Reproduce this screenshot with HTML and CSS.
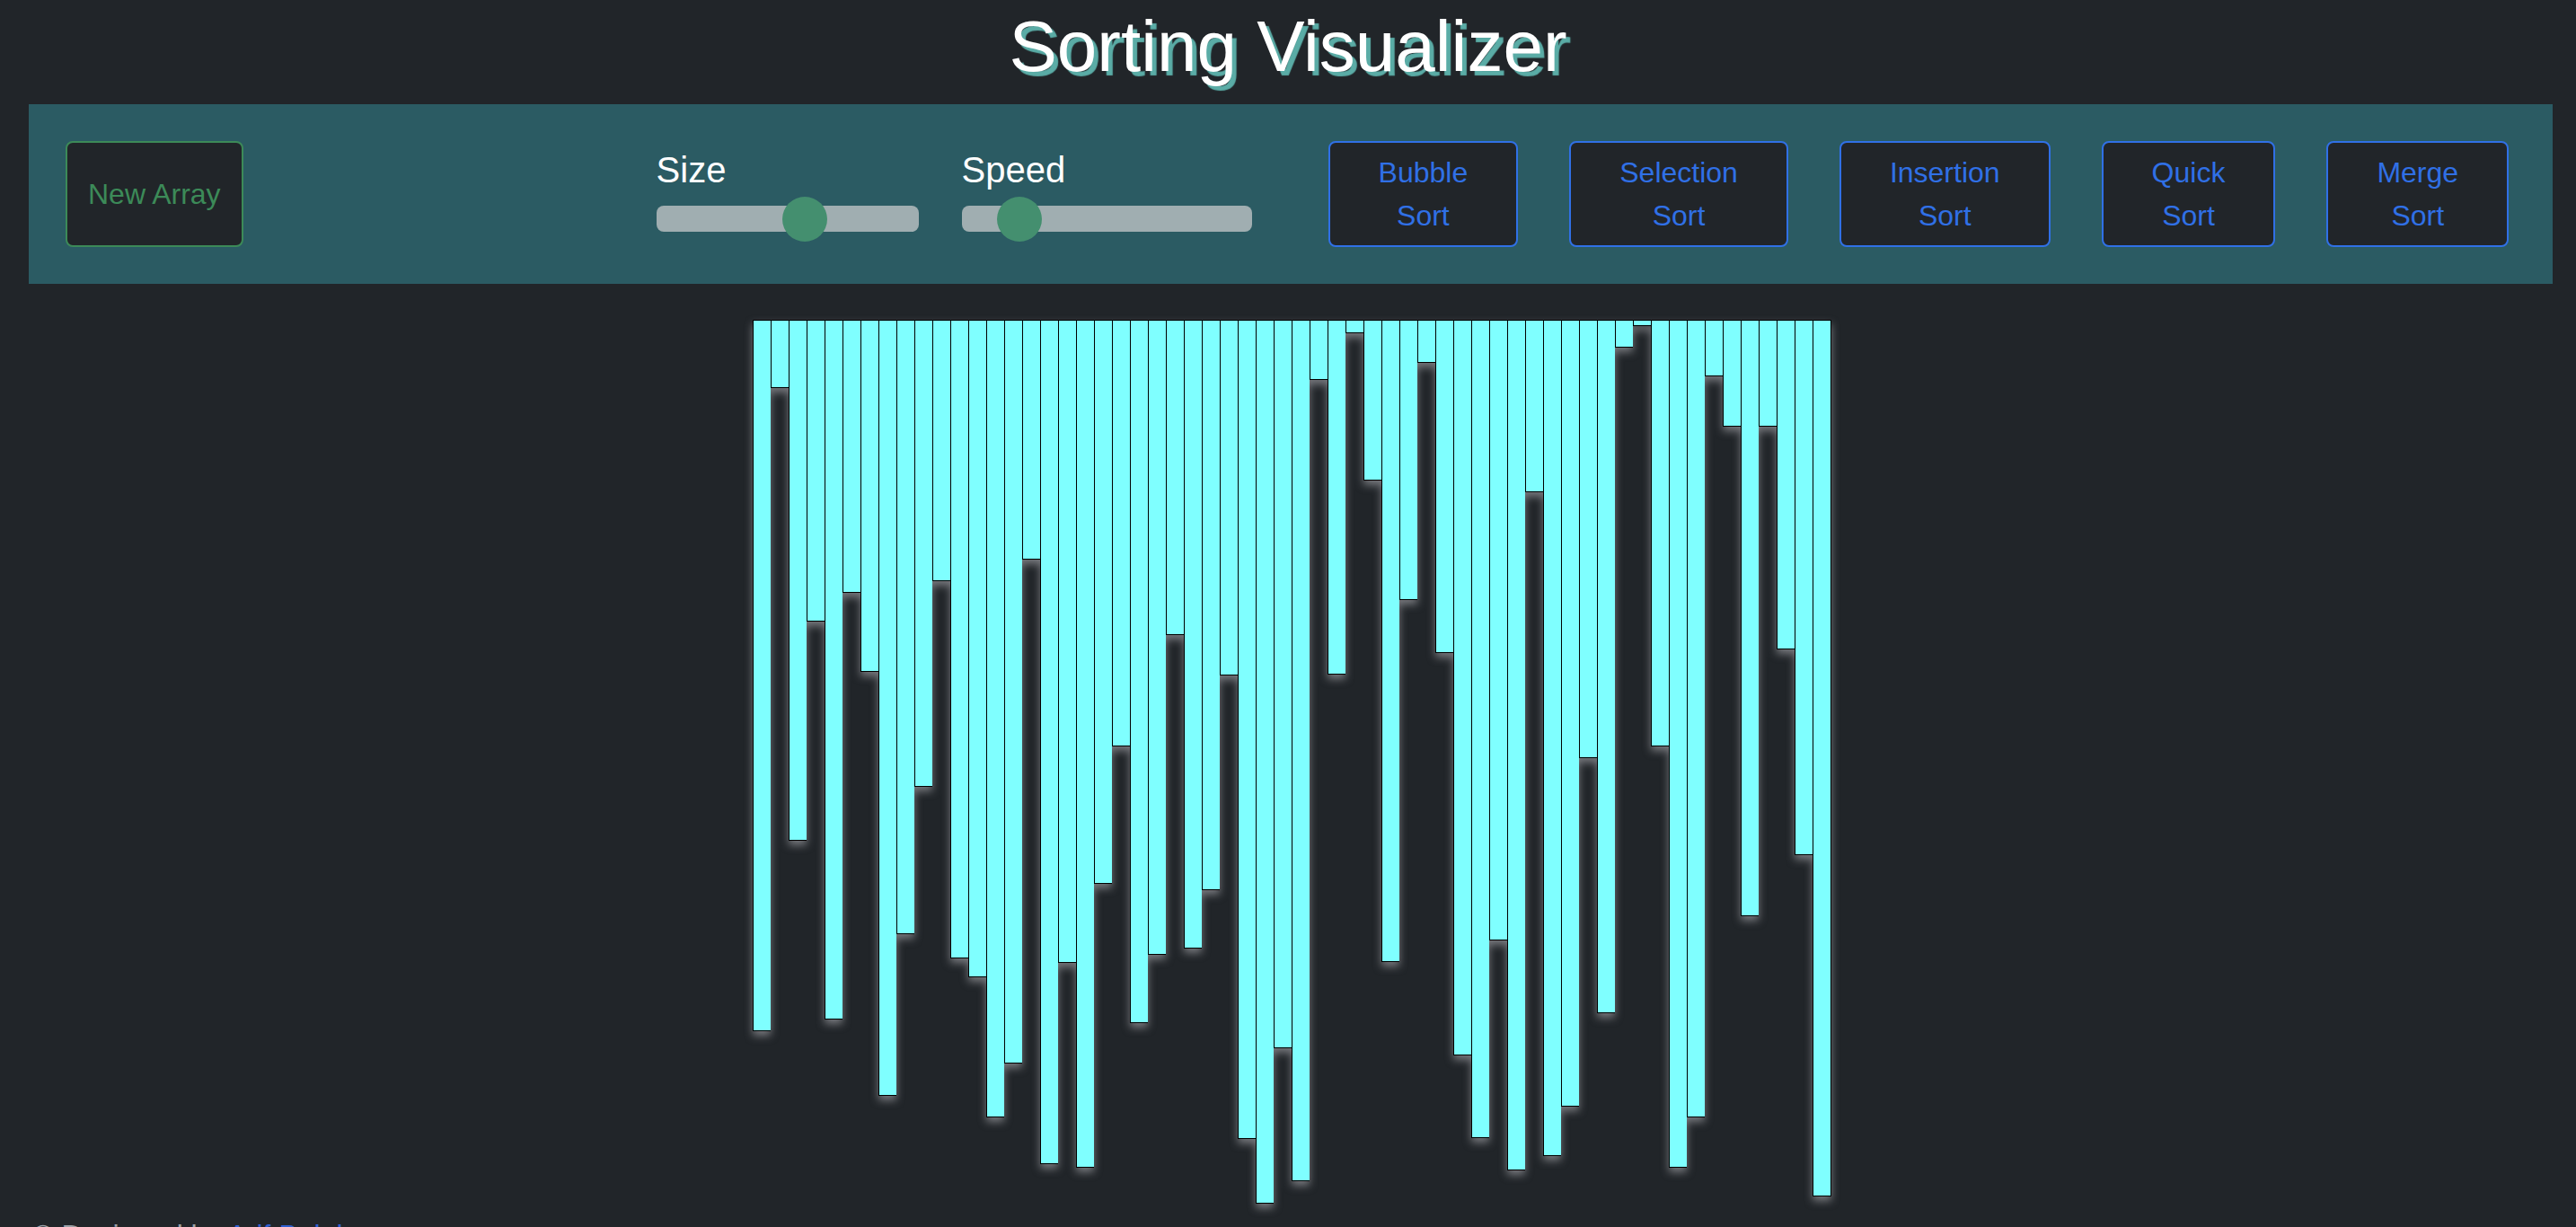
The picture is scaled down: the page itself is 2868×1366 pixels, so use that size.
FILE: index.html
```html
<!DOCTYPE html>
<html lang="en">
<head>
<meta charset="utf-8">
<title>Sorting Visualizer</title>
<link rel="stylesheet" href="styles.css">
</head>
<body>
<h1 class="title">Sorting Visualizer</h1>
<nav class="toolbar">
  <button class="btn btn-green">New Array</button>
  <div class="sliders">
    <div class="slider-group size">
      <div class="slider-label">Size</div>
      <div class="track" role="slider" aria-label="Size"><span class="thumb" style="left:140px"></span></div>
    </div>
    <div class="slider-group speed">
      <div class="slider-label">Speed</div>
      <div class="track" role="slider" aria-label="Speed"><span class="thumb" style="left:39px"></span></div>
    </div>
  </div>
  <div class="sorts">
    <button class="btn btn-blue">Bubble Sort</button>
    <button class="btn btn-blue">Selection Sort</button>
    <button class="btn btn-blue">Insertion Sort</button>
    <button class="btn btn-blue">Quick Sort</button>
    <button class="btn btn-blue">Merge Sort</button>
  </div>
</nav>
<main class="bars">
  <div class="bar" style="height:792px"></div>
  <div class="bar" style="height:76px"></div>
  <div class="bar" style="height:580px"></div>
  <div class="bar" style="height:336px"></div>
  <div class="bar" style="height:779px"></div>
  <div class="bar" style="height:304px"></div>
  <div class="bar" style="height:392px"></div>
  <div class="bar" style="height:864px"></div>
  <div class="bar" style="height:684px"></div>
  <div class="bar" style="height:520px"></div>
  <div class="bar" style="height:291px"></div>
  <div class="bar" style="height:711px"></div>
  <div class="bar" style="height:732px"></div>
  <div class="bar" style="height:888px"></div>
  <div class="bar" style="height:828px"></div>
  <div class="bar" style="height:267px"></div>
  <div class="bar" style="height:940px"></div>
  <div class="bar" style="height:716px"></div>
  <div class="bar" style="height:944px"></div>
  <div class="bar" style="height:628px"></div>
  <div class="bar" style="height:475px"></div>
  <div class="bar" style="height:783px"></div>
  <div class="bar" style="height:707px"></div>
  <div class="bar" style="height:351px"></div>
  <div class="bar" style="height:700px"></div>
  <div class="bar" style="height:635px"></div>
  <div class="bar" style="height:396px"></div>
  <div class="bar" style="height:912px"></div>
  <div class="bar" style="height:984px"></div>
  <div class="bar" style="height:811px"></div>
  <div class="bar" style="height:959px"></div>
  <div class="bar" style="height:67px"></div>
  <div class="bar" style="height:395px"></div>
  <div class="bar" style="height:15px"></div>
  <div class="bar" style="height:179px"></div>
  <div class="bar" style="height:715px"></div>
  <div class="bar" style="height:312px"></div>
  <div class="bar" style="height:48px"></div>
  <div class="bar" style="height:371px"></div>
  <div class="bar" style="height:819px"></div>
  <div class="bar" style="height:911px"></div>
  <div class="bar" style="height:691px"></div>
  <div class="bar" style="height:947px"></div>
  <div class="bar" style="height:192px"></div>
  <div class="bar" style="height:931px"></div>
  <div class="bar" style="height:876px"></div>
  <div class="bar" style="height:488px"></div>
  <div class="bar" style="height:772px"></div>
  <div class="bar" style="height:31px"></div>
  <div class="bar" style="height:7px"></div>
  <div class="bar" style="height:475px"></div>
  <div class="bar" style="height:944px"></div>
  <div class="bar" style="height:888px"></div>
  <div class="bar" style="height:63px"></div>
  <div class="bar" style="height:119px"></div>
  <div class="bar" style="height:664px"></div>
  <div class="bar" style="height:119px"></div>
  <div class="bar" style="height:367px"></div>
  <div class="bar" style="height:596px"></div>
  <div class="bar" style="height:976px"></div>
</main>
<footer class="footer">© Designed by <a class="author" href="#">Arif Balal</a></footer>
</body>
</html>
```

FILE: styles.css
```css
html, body {
  margin: 0;
  padding: 0;
}
body {
  background: #212529;
  font-family: "Liberation Sans", Arial, sans-serif;
  color: #ffffff;
}
.title {
  margin: 0;
  padding-top: 4px;
  font-size: 80px;
  font-weight: normal;
  line-height: 96px;
  text-align: center;
  color: #ffffff;
  text-shadow: 5px 5px 1px #5aaca6;
}
.toolbar {
  margin: 16px 26px 0 32px;
  height: 200px;
  background: #2b5b63;
  display: flex;
  align-items: center;
  padding-left: 41px;
}
.btn {
  font-family: "Liberation Sans", Arial, sans-serif;
  font-size: 32px;
  line-height: 48px;
  background: #212529;
  border: 2px solid;
  border-radius: 8px;
  cursor: pointer;
}
.btn-green {
  color: #3c8a58;
  border-color: #3c8a58;
  padding: 0 23px;
  height: 118px;
  white-space: nowrap;
  box-sizing: border-box;
}
.btn-blue {
  color: #3070e6;
  border-color: #3070e6;
  padding: 0 54px;
  width: min-content;
  box-sizing: content-box;
  height: 114px;
}
.sliders {
  display: flex;
  margin-left: 460px;
}
.slider-group {
  padding-bottom: 10px;
}
.slider-group.size { width: 292px; }
.slider-group.speed { width: 323px; margin-left: 48px; }
.slider-label {
  font-size: 40px;
  line-height: 48px;
  color: #ffffff;
  margin-bottom: 16px;
}
.track {
  position: relative;
  height: 29px;
  border-radius: 8px;
  background: #a0aeb1;
}
.thumb {
  position: absolute;
  top: -10px;
  width: 50px;
  height: 50px;
  border-radius: 50%;
  background: #448f6f;
}
.sorts {
  display: flex;
  gap: 57px;
  margin-left: 85px;
}
.bars {
  display: flex;
  justify-content: center;
  align-items: flex-start;
  margin-top: 40px;
  padding-left: 8px;
  filter: drop-shadow(0 5px 5px rgba(190, 190, 195, 0.55));
}
.bar {
  width: 20px;
  box-sizing: border-box;
  background: #7fffff;
  border: 1px solid #000000;
  border-right: none;
}
.bar:last-child {
  width: 21px;
  border-right: 1px solid #000000;
}
.footer {
  margin-top: 11px;
  padding-left: 36px;
  font-size: 32px;
  line-height: 48px;
  color: #9aa0a6;
}
.author {
  color: #2f5fd0;
  text-decoration: none;
}
```
